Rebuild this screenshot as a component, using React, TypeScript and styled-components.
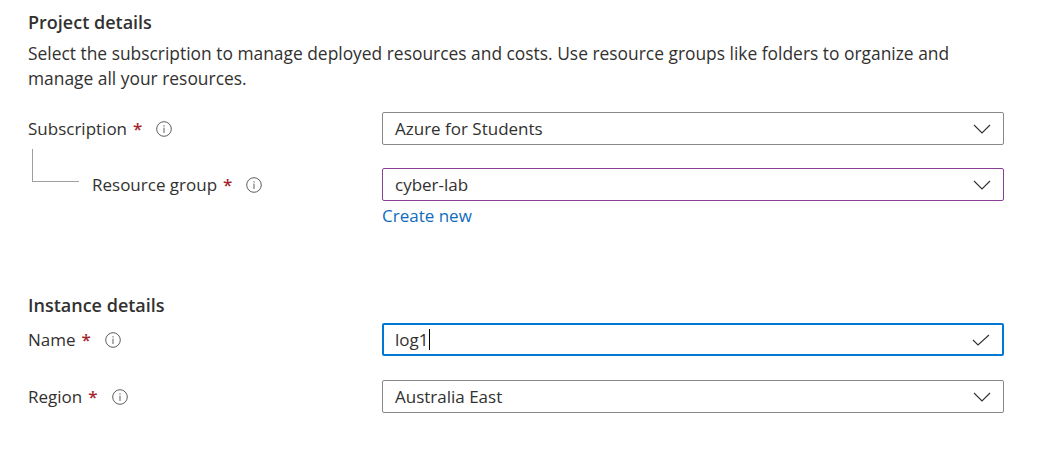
import React from "react";
import styled, { createGlobalStyle } from "styled-components";

const Global = createGlobalStyle`
  html, body { margin: 0; padding: 0; background: #fff; }
  body { font-family: "Open Sans", "Noto Sans", sans-serif; color: #323130; }
`;

const Page = styled.div`
  width: 1051px;
  height: 453px;
  box-sizing: border-box;
  padding: 9px 0 0 28px;
  overflow: hidden;
`;

const Heading = styled.h2<{ $top?: number }>`
  margin: ${(p) => p.$top ?? 0}px 0 0 0;
  font-size: 18px;
  font-weight: 600;
  line-height: 26px;
  color: #323130;
`;

const Desc = styled.p`
  margin: 6px 0 0 0;
  font-size: 17.4px;
  line-height: 25px;
  color: #323130;
  white-space: nowrap;
`;

const Row = styled.div<{ $top: number }>`
  display: grid;
  grid-template-columns: 354px 622px;
  margin-top: ${(p) => p.$top}px;
  align-items: start;
`;

const LabelCell = styled.div<{ $indent?: boolean }>`
  position: relative;
  display: flex;
  align-items: center;
  height: 33px;
  padding-left: ${(p) => (p.$indent ? 64 : 0)}px;
  font-size: 17px;
  color: #323130;
`;

const Star = styled.span`
  color: #a4262c;
  margin-left: 6px;
  font-weight: 600;
`;

const InfoIcon = styled.svg`
  margin-left: 14px;
  flex: none;
`;

const TreeLine = styled.div`
  position: absolute;
  left: 4px;
  top: -19px;
  width: 46px;
  height: 32px;
  border-left: 1px solid #a19f9d;
  border-bottom: 1px solid #a19f9d;
`;

const Control = styled.div<{ $variant?: "default" | "purple" | "focus" }>`
  box-sizing: border-box;
  height: 33px;
  display: flex;
  align-items: center;
  justify-content: space-between;
  padding: 0 12px 0 ${(p) => (p.$variant === "focus" ? 11 : 12)}px;
  border-radius: 2px;
  border: ${(p) =>
    p.$variant === "focus"
      ? "2px solid #0078d4"
      : p.$variant === "purple"
      ? "1px solid #8a3f96"
      : "1px solid #8a8886"};
  font-size: 17px;
  color: #323130;
`;

const Value = styled.span`
  display: flex;
  align-items: center;
`;

const Caret = styled.span`
  display: inline-block;
  width: 1px;
  height: 21px;
  background: #000;
  margin-left: 1px;
`;

const ControlCol = styled.div`
  display: flex;
  flex-direction: column;
`;

const Link = styled.a`
  color: #0f6cbd;
  font-size: 17px;
  line-height: 24px;
  margin-top: 3px;
  text-decoration: none;
  cursor: pointer;
`;

const Info = () => (
  <InfoIcon width="16" height="16" viewBox="0 0 16 16">
    <circle cx="8" cy="8" r="7.3" fill="none" stroke="#605e5c" strokeWidth="1" />
    <rect x="7.5" y="4.2" width="1" height="1.3" fill="#605e5c" />
    <rect x="7.5" y="6.6" width="1" height="5.4" fill="#605e5c" />
  </InfoIcon>
);

const Chevron = () => (
  <svg width="18" height="10" viewBox="0 0 18 10">
    <path d="M1 1 L9 9 L17 1" fill="none" stroke="#323130" strokeWidth="1.1" />
  </svg>
);

const Check = () => (
  <svg width="18" height="12" viewBox="0 0 18 12">
    <path d="M1 6 L6 11 L17 1" fill="none" stroke="#323130" strokeWidth="1.1" />
  </svg>
);

const Label: React.FC<{ text: string; indent?: boolean }> = ({ text, indent }) => (
  <LabelCell $indent={indent}>
    {indent && <TreeLine />}
    {text}
    <Star>*</Star>
    <Info />
  </LabelCell>
);

export default function App() {
  return (
    <Page>
      <Global />
      <Heading>Project details</Heading>
      <Desc>
        Select the subscription to manage deployed resources and costs. Use resource groups like folders to organize and
        <br />
        manage all your resources.
      </Desc>
      <Row $top={21}>
        <Label text="Subscription" />
        <Control>
          <Value>Azure for Students</Value>
          <Chevron />
        </Control>
      </Row>
      <Row $top={23}>
        <Label text="Resource group" indent />
        <ControlCol>
          <Control $variant="purple">
            <Value>cyber-lab</Value>
            <Chevron />
          </Control>
          <Link>Create new</Link>
        </ControlCol>
      </Row>
      <Heading $top={64}>Instance details</Heading>
      <Row $top={5}>
        <Label text="Name" />
        <Control $variant="focus">
          <Value>
            log1
            <Caret />
          </Value>
          <Check />
        </Control>
      </Row>
      <Row $top={24}>
        <Label text="Region" />
        <Control>
          <Value>Australia East</Value>
          <Chevron />
        </Control>
      </Row>
    </Page>
  );
}
